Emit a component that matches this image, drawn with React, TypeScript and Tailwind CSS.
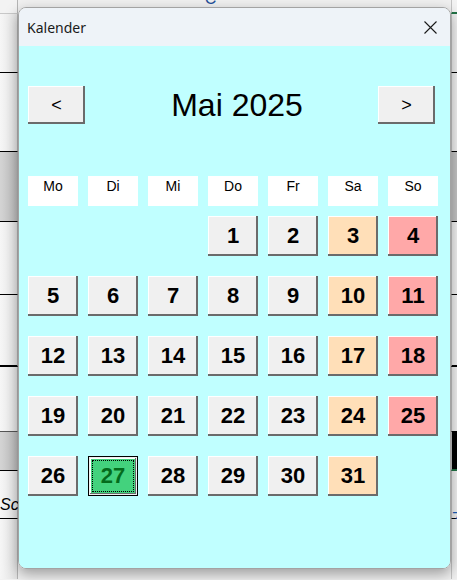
import React from 'react';

const weekdays = ['Mo', 'Di', 'Mi', 'Do', 'Fr', 'Sa', 'So'];

// Mai 2025 beginnt an einem Donnerstag
const firstOffset = 3;
const daysInMonth = 31;
const today = 27;

const raised =
  'shadow-[inset_-2px_-2px_0_0_#6b6b6b,inset_1px_1px_0_0_#ffffff]';

const DayButton = ({ day, col }: { day: number; col: number }) => {
  if (day === today) {
    return (
      <div className="w-[50px] h-[40px] border border-black bg-[#f0f0f0] p-[1px]">
        <div className="w-full h-full bg-[#43d27d] shadow-[inset_-1px_-1px_0_0_#6b6b6b,inset_1px_1px_0_0_#ffffff] p-[2px]">
          <div className="w-full h-full border border-dotted border-black flex items-center justify-center text-[22px] font-bold text-[#036b1c] leading-none">
            {day}
          </div>
        </div>
      </div>
    );
  }
  const bg = col === 5 ? 'bg-[#ffdfb8]' : col === 6 ? 'bg-[#ffa8a8]' : 'bg-[#f0f0f0]';
  return (
    <div
      className={`w-[50px] h-[40px] ${bg} ${raised} flex items-center justify-center text-[22px] font-bold text-black leading-none pb-[1px]`}
    >
      {day}
    </div>
  );
};

const NavButton = ({ label }: { label: string }) => (
  <div
    className={`w-[57px] h-[38px] bg-[#f0f0f0] ${raised} flex items-center justify-center text-[18px] text-black leading-none`}
  >
    {label}
  </div>
);

// Zeilen der Tabelle im Hintergrund
const sheetRows = [
  { h: 14, left: 'bg-[#f3f3f3]', right: 'bg-[#f3f3f3]', line: 'border-b border-[#c8c8c8]', rightLine: 'border-b-2 border-[#217346]' },
  { h: 59, left: 'bg-gradient-to-r from-[#f6f6f6] to-[#e6e6e6]', right: 'bg-[#f0f0f0]', line: 'border-b border-black', rightLine: 'border-b border-black' },
  { h: 79, left: 'bg-gradient-to-r from-[#f6f6f6] to-[#e6e6e6]', right: 'bg-[#f0f0f0]', line: 'border-b border-black', rightLine: 'border-b border-black' },
  { h: 70, left: 'bg-gradient-to-r from-[#d4d4d4] to-[#bdbdbd]', right: 'bg-[#c2c2c2]', line: 'border-b border-black', rightLine: 'border-b border-black' },
  { h: 73, left: 'bg-gradient-to-r from-[#f6f6f6] to-[#e6e6e6]', right: 'bg-[#f0f0f0]', line: 'border-b border-black', rightLine: 'border-b border-black' },
  { h: 72, left: 'bg-gradient-to-r from-[#f6f6f6] to-[#e6e6e6]', right: 'bg-[#f0f0f0]', line: 'border-b-2 border-black', rightLine: 'border-b-2 border-black' },
  { h: 65, left: 'bg-gradient-to-r from-[#f6f6f6] to-[#e6e6e6]', right: 'bg-[#f0f0f0]', line: 'border-b border-[#555]', rightLine: 'border-b border-black' },
  { h: 39, left: 'bg-gradient-to-r from-[#d4d4d4] to-[#bdbdbd]', right: 'bg-black', line: 'border-b border-black', rightLine: 'border-b-2 border-[#217346]' },
  { h: 48, left: 'bg-gradient-to-r from-[#f6f6f6] to-[#e6e6e6]', right: 'bg-[#f0f0f0]', line: 'border-b border-black', rightLine: 'border-b border-black' },
  { h: 60, left: 'bg-gradient-to-r from-[#f6f6f6] to-[#e2e2e2]', right: 'bg-[#f0f0f0]', line: '', rightLine: '' },
];

export default function App() {
  const cells: (number | null)[] = [];
  for (let i = 0; i < firstOffset; i++) cells.push(null);
  for (let d = 1; d <= daysInMonth; d++) cells.push(d);

  return (
    <div
      className="relative w-[457px] h-[580px] overflow-hidden bg-[#f2f2f2]"
      style={{ fontFamily: '"Liberation Sans", Arial, sans-serif' }}
    >
      {/* Tabelle im Hintergrund */}
      <div className="flex flex-col w-full h-full">
        {sheetRows.map((r, i) => (
          <div key={i} className="flex shrink-0" style={{ height: r.h }}>
            <div className={`w-[18px] h-full ${r.left} ${r.line} border-r border-r-[#b5b5b5] relative`}>
              {i === 8 && (
                <span className="absolute left-0 top-[26px] text-[16px] italic text-black leading-none whitespace-nowrap">
                  Sc
                </span>
              )}
            </div>
            <div className="flex-1 h-full bg-[#f0f0f0] flex justify-center">
              {i === 0 && <span className="text-[16px] leading-none -mt-[9px] text-[#1f4f9a] ml-[-48px]">C</span>}
            </div>
            <div className={`w-[6px] h-full ${r.right} ${r.rightLine} border-l border-l-[#c4c4c4] relative overflow-visible`}>
              {i === 8 && (
                <span className="absolute left-0 top-[40px] text-[16px] text-[#1d5fb8] leading-none">7</span>
              )}
            </div>
          </div>
        ))}
      </div>

      {/* Dialog */}
      <div className="absolute left-[18px] top-[7px] w-[433px] h-[562px] rounded-[8px] border border-[#a3a3a3] overflow-hidden flex flex-col shadow-[0_5px_14px_rgba(0,0,0,0.35)]">
        <div className="h-[38px] shrink-0 bg-[#eef3f8] flex items-center justify-between pl-[8px] pr-[13px]">
          <span
            className="text-[14px] text-[#1a1a1a] pt-[1px]"
            style={{ fontFamily: '"Noto Sans", "Open Sans", sans-serif' }}
          >
            Kalender
          </span>
          <svg width="13" height="13" viewBox="0 0 13 13" className="mt-[1px]">
            <path d="M0.5 0.5 L12.5 12.5 M12.5 0.5 L0.5 12.5" stroke="#1a1a1a" strokeWidth="1.1" fill="none" />
          </svg>
        </div>

        <div className="flex-1 bg-[#c0ffff] pl-[9px] pr-[12px]">
          <div className="flex items-center mt-[40px] pr-[3px]">
            <NavButton label="<" />
            <div className="flex-1 text-center text-[32px] text-black leading-none pl-[11px]">Mai 2025</div>
            <NavButton label=">" />
          </div>

          <div className="grid grid-cols-[repeat(7,50px)] gap-x-[10px] mt-[52px]">
            {weekdays.map((w) => (
              <div key={w} className="h-[30px] bg-white text-center text-[14px] leading-[16px] pt-[2px] text-black">
                {w}
              </div>
            ))}
          </div>

          <div className="grid grid-cols-[repeat(7,50px)] gap-x-[10px] gap-y-[20px] mt-[10px]">
            {cells.map((d, i) =>
              d === null ? (
                <div key={`e${i}`} className="h-[40px]" />
              ) : (
                <DayButton key={d} day={d} col={i % 7} />
              )
            )}
          </div>
        </div>
      </div>
    </div>
  );
}
